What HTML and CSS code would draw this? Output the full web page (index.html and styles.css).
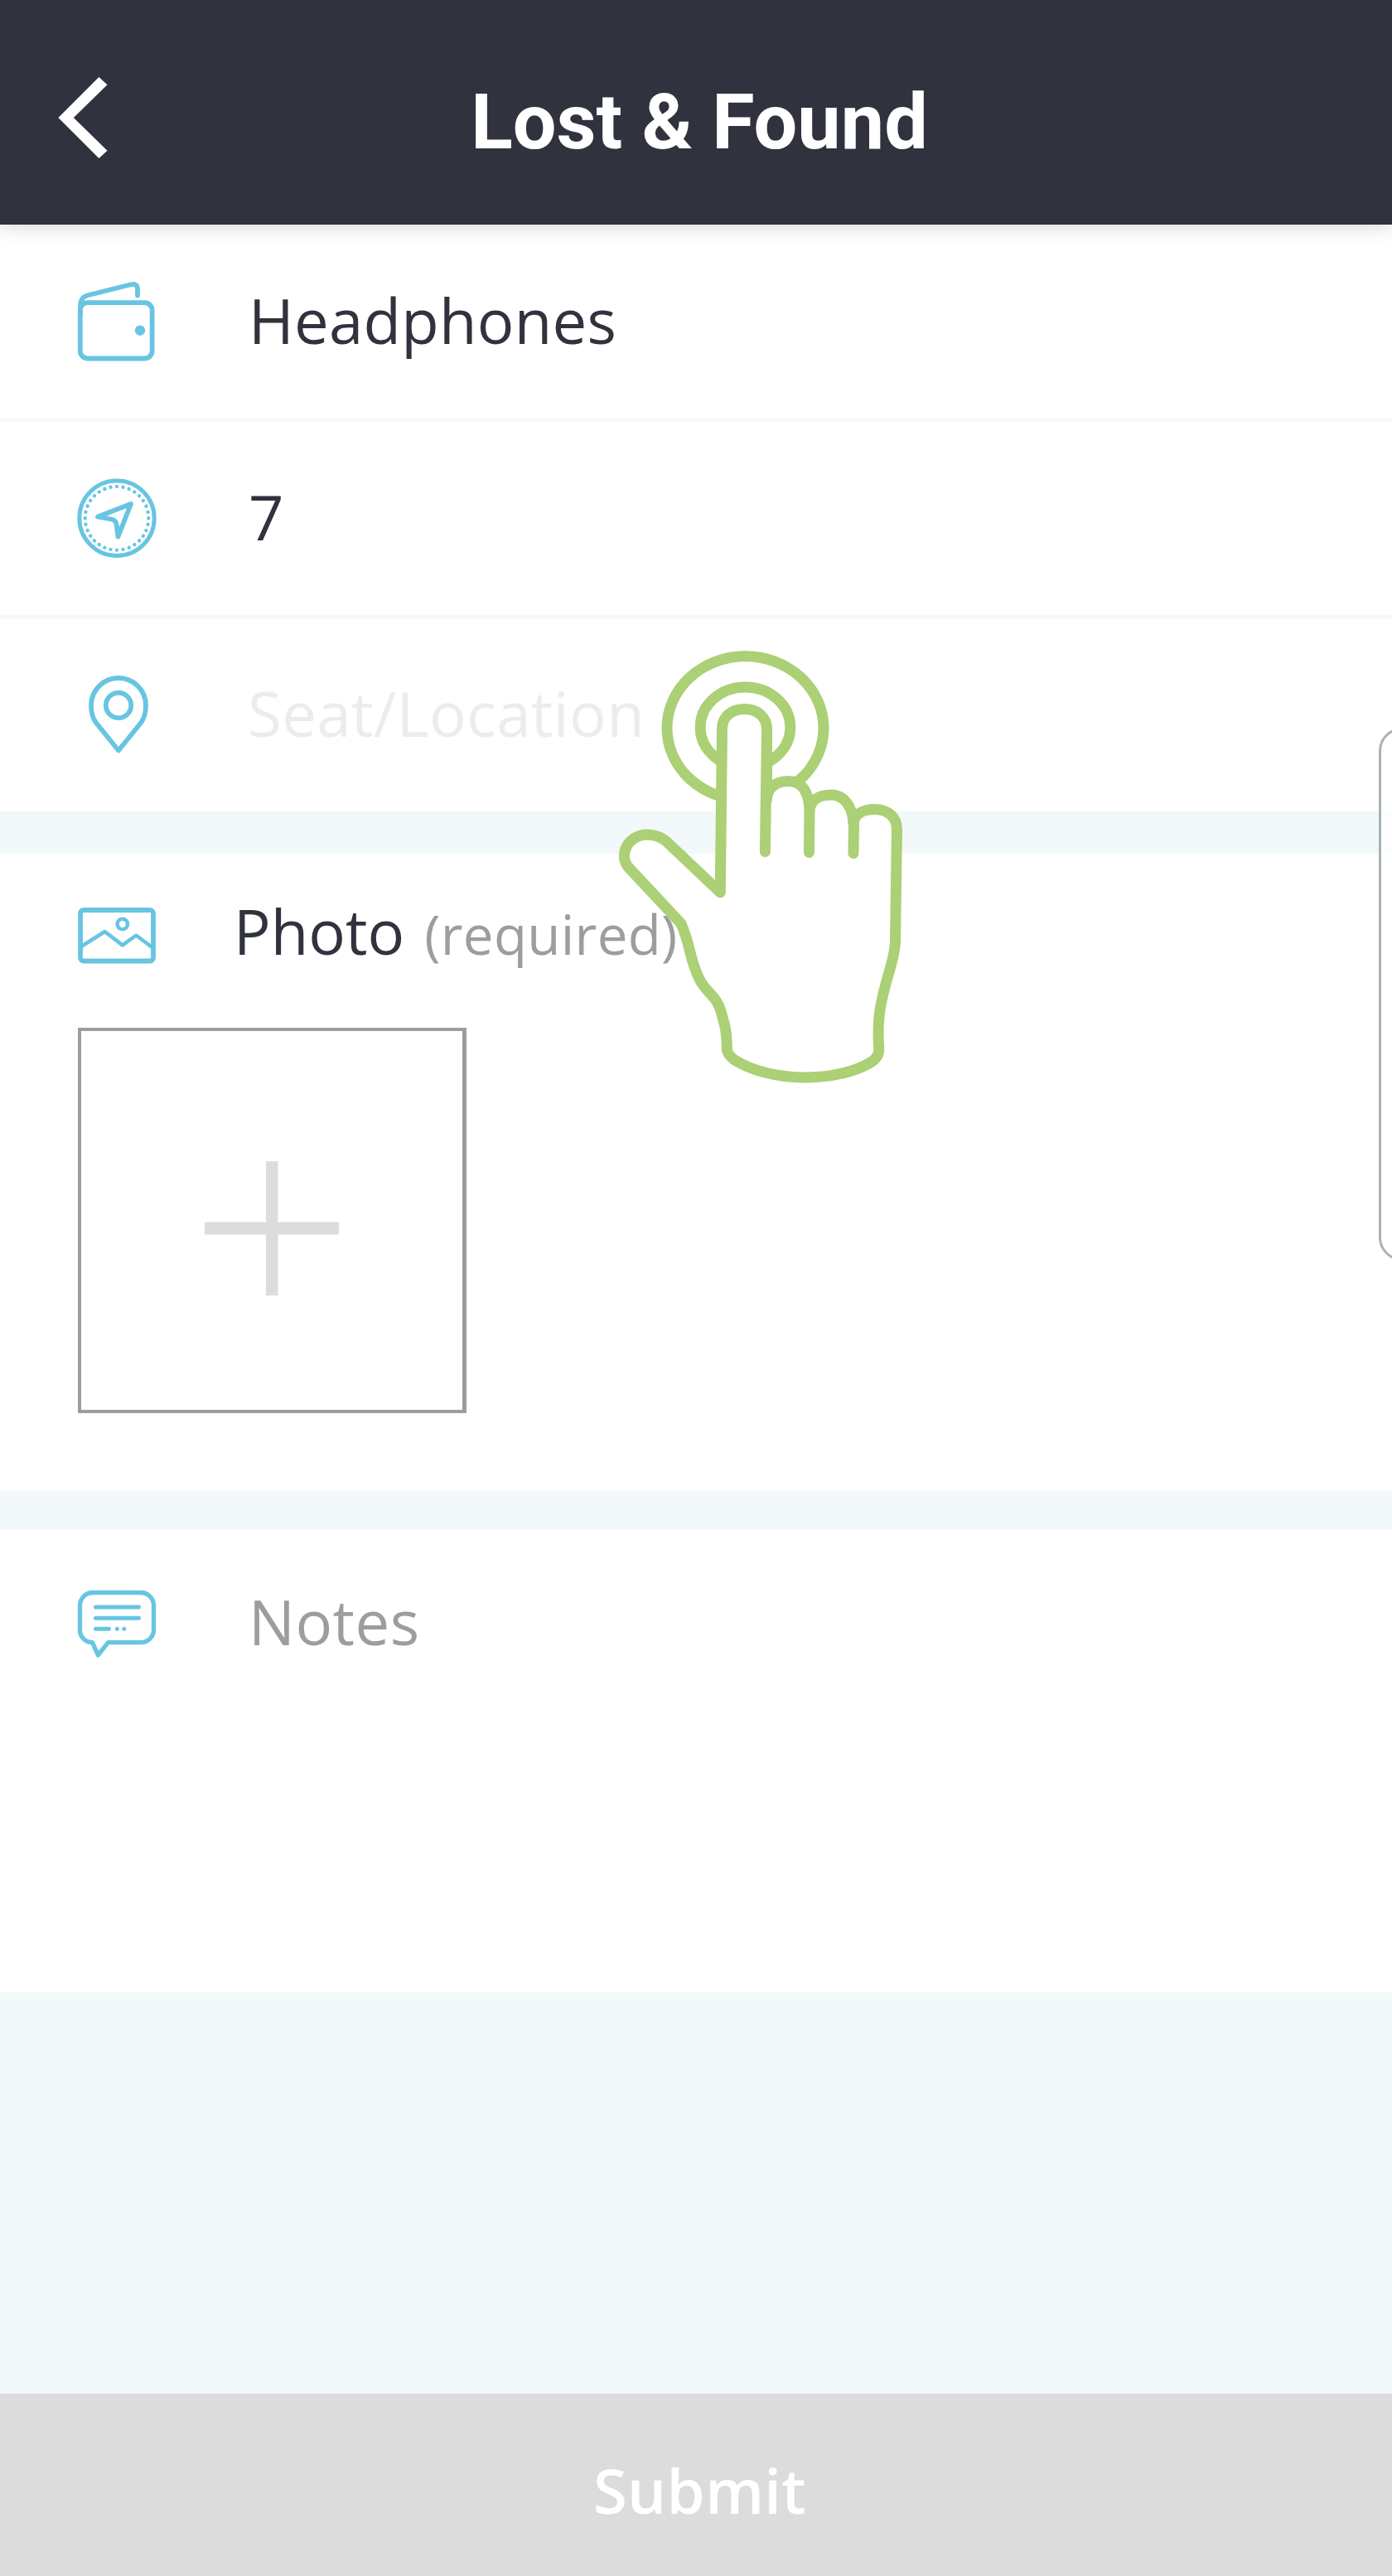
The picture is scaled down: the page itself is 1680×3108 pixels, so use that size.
FILE: index.html
```html
<!DOCTYPE html>
<html lang="en">
<head>
<meta charset="utf-8">
<title>Lost &amp; Found</title>
<link rel="stylesheet" href="styles.css">
</head>
<body>
<div class="screen">
  <header class="header">
    <svg class="back" viewBox="60 80 80 124"><path d="M119.4 93L129.5 102.3L88.8 142L129.5 181.7L119.4 191L70.4 142Z"/></svg>
    <h1 class="title">Lost &amp; Found</h1>
  </header>

  <main class="form">
    <div class="row">
      <svg class="icon" viewBox="80 271 120 234">
        <rect x="96.8" y="365.2" width="86.8" height="67.3" rx="9"/>
        <path d="M97 378V369Q97 359 105 356.500L158 343.300Q166 341.500 166 349V356.500"/>
        <circle class="solid" cx="169" cy="398.700" r="6.200"/>
      </svg>
      <span class="label">Headphones</span>
    </div>
    <div class="row">
      <svg class="icon" viewBox="80 509 120 233">
        <circle cx="141" cy="625.300" r="45.200" stroke-width="5"/>
        <circle class="dots" cx="141" cy="625.300" r="38.300" pathLength="320"/>
        <path d="M118 623.500L158 608L142.500 647.500L140.500 632.500Q139.800 627.500 134.500 626.500Z"/>
      </svg>
      <span class="label">7</span>
    </div>
    <div class="row row-last">
      <svg class="icon" viewBox="80 746 120 233">
        <path d="M143 905.500L115.500 871.500C111 865 110 858 110 851A33 33 0 0 1 176 851C176 858 175 865 170.500 871.500Z"/>
        <circle cx="143" cy="851" r="15.200"/>
      </svg>
      <span class="label placeholder">Seat/Location</span>
    </div>

    <section class="photo">
      <div class="photo-head">
        <svg class="icon" viewBox="80 1030 120 210">
          <rect x="97" y="1098" width="88" height="61.500" rx="4"/>
          <path d="M98 1142L126.500 1124L147.800 1140.300L164.300 1128.500L185 1144" stroke-width="4.600"/>
          <circle cx="147.800" cy="1115" r="6.200" stroke-width="4.600"/>
        </svg>
        <span class="photo-label">Photo</span>
        <span class="required">(required)</span>
      </div>
      <div class="add-photo">
        <svg class="plus" viewBox="0 0 162 162"><path d="M74 0H88.500V73.500H162V88.500H88.500V162H74V88.500H0V73.500H74Z"/></svg>
      </div>
    </section>

    <section class="notes">
      <svg class="icon" viewBox="80 1846 120 219">
        <path d="M112 1921.500H170A15.500 15.500 0 0 1 185.500 1937V1966A15.500 15.500 0 0 1 170 1981.700H130.500L118.300 1997L111.500 1981.700A15 15 0 0 1 96.500 1966V1937A15.500 15.500 0 0 1 112 1921.500Z" stroke-width="5.300"/>
        <path d="M115.500 1939H167.500M115.500 1952.300H167.500M115.500 1965.300H131.500M141.300 1965.300h.1M149.700 1965.300h.1" stroke-width="5"/>
      </svg>
      <span class="label muted">Notes</span>
    </section>
  </main>

  <footer class="submit">Submit</footer>

  <div class="edge-panel"></div>

  <svg class="tap-hint" viewBox="740 770 370 550">
    <ellipse cx="899.500" cy="878.500" rx="94.500" ry="86.800" fill="none"/>
    <ellipse cx="899.500" cy="877.500" rx="54.300" ry="48.500" fill="none"/>
    <path d="M869.300 1076.700L871.500 880C871.500 864 883 855.500 899 855.500S925.500 866 925.500 880V965C925.500 951 936 942.500 951.500 942.500S976.500 954 977 978C978 966 988 959 1003 959S1029 972 1030 994C1031 982 1042 976.500 1055.500 976.500C1073 976.500 1082.500 987 1082.500 1001L1080.500 1135C1080.500 1149 1076 1162 1073 1173C1067 1193 1064 1205 1061.500 1222C1058.500 1247 1060.700 1254 1060.700 1266.700C1060.700 1272 1058 1277 1052 1281C1035 1292 1005 1300 973 1300C936 1300 906 1291 886.700 1279C880 1274 877.500 1270 877.300 1265C877.300 1240 873 1232 870 1220C865 1202 853 1198 845 1183C831 1156 834 1140 821.700 1114L759 1047C750 1037 752 1021 764 1012.500C776 1004 793 1006 804 1015Z"/>
    <path d="M925.500 884L923.400 1027.500M977 978L976.500 1028.500M1030.500 994L1030 1029.500" fill="none"/>
  </svg>
</div>
</body>
</html>
```
FILE: styles.css
```css
* { box-sizing: border-box; }

body {
  margin: 0;
  background: #f3f8fa;
  font-family: "Open Sans", "Noto Sans", sans-serif;
  color: #30323e;
}

.screen {
  position: relative;
  display: flex;
  flex-direction: column;
  width: 1680px;
  height: 3108px;
  overflow: hidden;
}

.header {
  position: relative;
  z-index: 1;
  display: grid;
  grid-template-columns: 140px 1fr 140px;
  flex: none;
  height: 271px;
  background: #30323e;
  box-shadow: 0 2px 22px rgba(48, 50, 62, .2);
}

.back {
  width: 80px;
  height: 124px;
  margin: 80px 0 0 60px;
  fill: #fff;
}

.title {
  display: flex;
  align-items: center;
  justify-content: center;
  margin: 0;
  padding: 22px 0 0 8px;
  color: #fff;
  font: 700 93.5px Roboto, sans-serif;
  white-space: nowrap;
}

.form { flex: 1; }

.row {
  display: flex;
  height: 237px;
  padding-left: 80px;
  background: #fff;
  border-bottom: 4px solid #f5f7f9;
}

.row:first-child { height: 238px; }

.row.row-last {
  height: 233px;
  border-bottom: 0;
}

.icon {
  flex: none;
  width: 120px;
  height: 100%;
  fill: none;
  stroke: #68c5e2;
  stroke-width: 5.8;
  stroke-linecap: round;
  stroke-linejoin: round;
}

.icon .solid { fill: #68c5e2; stroke: none; }

.icon .dots {
  stroke-width: 4.4;
  stroke-dasharray: .01 9.99;
}

.label {
  display: flex;
  align-items: center;
  padding: 0 0 3px 100px;
  font-size: 74.3px;
  line-height: 74px;
  letter-spacing: .25px;
}

.placeholder {
  padding-left: 99px;
  color: #ececec;
  letter-spacing: .45px;
}

.muted {
  color: #9b9d9e;
  letter-spacing: .45px;
}

.photo {
  margin-top: 51px;
  height: 768px;
  background: #fff;
}

.photo-head {
  display: flex;
  align-items: baseline;
  height: 210px;
  padding-left: 80px;
  line-height: 188px;
}

.photo-head .icon { align-self: stretch; }

.photo-label {
  margin-left: 82px;
  font-size: 74.3px;
}

.required {
  margin-left: 24px;
  color: #9b9d9e;
  font-size: 65.5px;
  letter-spacing: .3px;
}

.add-photo {
  display: flex;
  align-items: center;
  justify-content: center;
  width: 469px;
  height: 465px;
  margin-left: 94px;
  padding-top: 18px;
  border: 4px solid #9b9d9e;
  border-right-width: 5px;
}

.plus {
  width: 162px;
  height: 162px;
  fill: #dcdcdc;
}

.notes {
  display: flex;
  align-items: flex-start;
  height: 558px;
  margin-top: 48px;
  padding-left: 80px;
  background: #fff;
}

.notes .icon,
.notes .label { height: 219px; }

.notes .label { padding: 2px 0 0 100px; }

.submit {
  display: flex;
  align-items: center;
  justify-content: center;
  flex: none;
  height: 220px;
  padding: 12px 0 0 9px;
  background: #dcdcdc;
  color: #fff;
  font-size: 74.3px;
  font-weight: 600;
  letter-spacing: .3px;
}

.edge-panel {
  position: absolute;
  top: 878px;
  left: 1664px;
  width: 60px;
  height: 643px;
  border: 3px solid #a9b3b3;
  border-radius: 28px;
  background: rgba(255, 255, 255, .7);
}

.tap-hint {
  position: absolute;
  top: 770px;
  left: 740px;
  width: 370px;
  height: 550px;
  fill: #fff;
  stroke: #abd075;
  stroke-width: 13;
  stroke-linecap: round;
  stroke-linejoin: round;
}
```
